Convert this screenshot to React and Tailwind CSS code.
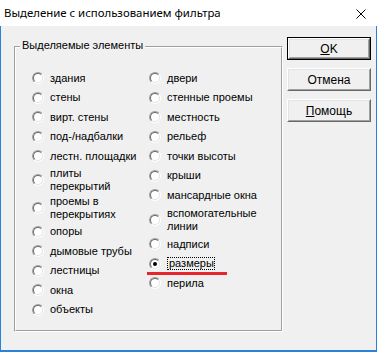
import React from "react";

function Radio({ checked }) {
  return (
    <div className="w-[12px] h-[12px] shrink-0 rounded-full border border-t-[#a0a0a0] border-l-[#a0a0a0] border-r-white border-b-white">
      <div className="w-full h-full rounded-full border border-t-[#696969] border-l-[#696969] border-r-[#e3e3e3] border-b-[#e3e3e3] bg-white flex items-center justify-center">
        {checked && <div className="w-[4px] h-[4px] rounded-full bg-black" />}
      </div>
    </div>
  );
}

function Item({ lines, h, checked, focus }) {
  return (
    <div className={"flex items-center gap-[6px] " + h}>
      <Radio checked={checked} />
      {focus ? (
        <div className="w-[48px] h-[13px] border border-dotted border-black overflow-hidden whitespace-nowrap pl-[1px] leading-[11px]">
          {lines[0]}
        </div>
      ) : (
        <div className="leading-[13px]">
          {lines.map((l, i) => (
            <div key={i} className="whitespace-nowrap">{l}</div>
          ))}
        </div>
      )}
    </div>
  );
}

function Btn({ children, def }) {
  const inner = (
    <div className="h-full border border-t-white border-l-white border-r-[#696969] border-b-[#696969]">
      <div className="h-full border border-t-[#e3e3e3] border-l-[#e3e3e3] border-r-[#a0a0a0] border-b-[#a0a0a0] bg-[#f0f0f0] flex items-center justify-center text-[12px] text-black">
        {children}
      </div>
    </div>
  );
  return def ? (
    <div className="w-[84px] h-[23px] border border-black">{inner}</div>
  ) : (
    <div className="w-[84px] h-[23px]">{inner}</div>
  );
}

export default function App() {
  const S1 = "h-[19.5px]";
  return (
    <div
      className="relative w-[377px] h-[352px] flex flex-col text-black text-[11px]"
      style={{ fontFamily: '"Liberation Sans", Arial, sans-serif' }}
    >
      <div className="h-[26px] bg-white flex items-center justify-between pl-[4px] pr-[11px] shrink-0">
        <span className="text-[11.4px]" style={{ fontFamily: '"Segoe UI", "Noto Sans", sans-serif' }}>
          Выделение с использованием фильтра
        </span>
        <svg width="10" height="10" viewBox="0 0 10 10" className="mt-[2px]">
          <path d="M0.5 0.5 L9.5 9.5 M9.5 0.5 L0.5 9.5" stroke="#000" strokeWidth="1" />
        </svg>
      </div>
      <div className="flex-1 bg-[#f0f0f0] border-l border-r border-b-2 border-[#2a83d6] flex items-start pl-[13px]">
        <div className="relative mt-[20px] w-[269px] h-[286px] border border-t-[#a0a0a0] border-l-[#a0a0a0] border-r-white border-b-white">
          <div className="h-full border border-t-white border-l-white border-r-[#a0a0a0] border-b-[#a0a0a0] pt-[20.5px] pl-[16px] flex">
            <div className="w-[117px] flex flex-col">
              <Item lines={["здания"]} h={S1} />
              <Item lines={["стены"]} h={S1} />
              <Item lines={["вирт. стены"]} h={S1} />
              <Item lines={["под-/надбалки"]} h={S1} />
              <Item lines={["лестн. площадки"]} h={S1} />
              <Item lines={["плиты", "перекрытий"]} h="h-[28px]" />
              <Item lines={["проемы в", "перекрытиях"]} h="h-[28px]" />
              <Item lines={["опоры"]} h={S1} />
              <Item lines={["дымовые трубы"]} h={S1} />
              <Item lines={["лестницы"]} h={S1} />
              <Item lines={["окна"]} h={S1} />
              <Item lines={["объекты"]} h={S1} />
            </div>
            <div className="flex flex-col">
              <Item lines={["двери"]} h={S1} />
              <Item lines={["стенные проемы"]} h={S1} />
              <Item lines={["местность"]} h={S1} />
              <Item lines={["рельеф"]} h={S1} />
              <Item lines={["точки высоты"]} h={S1} />
              <Item lines={["крыши"]} h={S1} />
              <Item lines={["мансардные окна"]} h={S1} />
              <Item lines={["вспомогательные", "линии"]} h="h-[29.5px]" />
              <Item lines={["надписи"]} h={S1} />
              <Item lines={["размеры"]} h={S1} checked focus />
              <Item lines={["перила"]} h={S1} />
            </div>
          </div>
          <div className="absolute left-[5px] top-[-8px] px-[2px] bg-[#f0f0f0] leading-[13px] whitespace-nowrap">
            Выделяемые элементы
          </div>
        </div>
        <div className="ml-[4px] mt-[11px] flex flex-col gap-[8px]">
          <Btn def>
            <span><span className="underline">O</span>K</span>
          </Btn>
          <Btn>Отмена</Btn>
          <Btn>
            <span><span className="underline">П</span>омощь</span>
          </Btn>
        </div>
      </div>
      <div className="absolute left-[147px] top-[272px] w-[80px] h-[3px] bg-[#e8242c]" />
    </div>
  );
}
